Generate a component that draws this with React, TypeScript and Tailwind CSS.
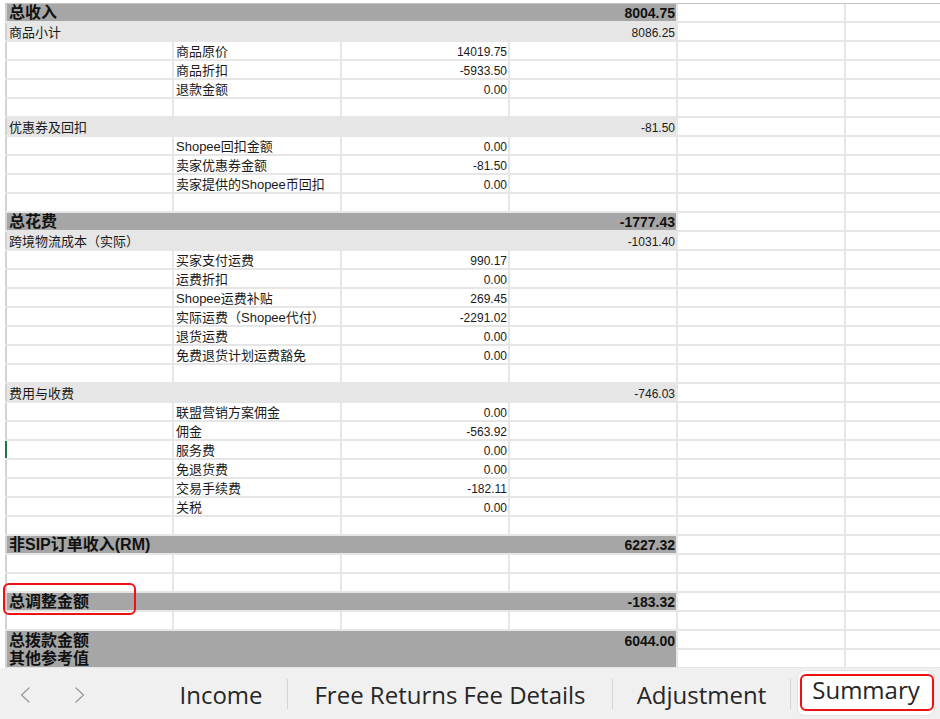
import React from "react";

type Row =
  | { kind: "major"; label: string; value: string }
  | { kind: "total"; label: string; label2: string; value: string }
  | { kind: "minor"; label: string; value: string }
  | { kind: "item"; label: string; value: string }
  | { kind: "blank" };

const rows: Row[] = [
  { kind: "major", label: "总收入", value: "8004.75" },
  { kind: "minor", label: "商品小计", value: "8086.25" },
  { kind: "item", label: "商品原价", value: "14019.75" },
  { kind: "item", label: "商品折扣", value: "-5933.50" },
  { kind: "item", label: "退款金额", value: "0.00" },
  { kind: "blank" },
  { kind: "minor", label: "优惠券及回扣", value: "-81.50" },
  { kind: "item", label: "Shopee回扣金额", value: "0.00" },
  { kind: "item", label: "卖家优惠券金额", value: "-81.50" },
  { kind: "item", label: "卖家提供的Shopee币回扣", value: "0.00" },
  { kind: "blank" },
  { kind: "major", label: "总花费", value: "-1777.43" },
  { kind: "minor", label: "跨境物流成本（实际）", value: "-1031.40" },
  { kind: "item", label: "买家支付运费", value: "990.17" },
  { kind: "item", label: "运费折扣", value: "0.00" },
  { kind: "item", label: "Shopee运费补贴", value: "269.45" },
  { kind: "item", label: "实际运费（Shopee代付）", value: "-2291.02" },
  { kind: "item", label: "退货运费", value: "0.00" },
  { kind: "item", label: "免费退货计划运费豁免", value: "0.00" },
  { kind: "blank" },
  { kind: "minor", label: "费用与收费", value: "-746.03" },
  { kind: "item", label: "联盟营销方案佣金", value: "0.00" },
  { kind: "item", label: "佣金", value: "-563.92" },
  { kind: "item", label: "服务费", value: "0.00" },
  { kind: "item", label: "免退货费", value: "0.00" },
  { kind: "item", label: "交易手续费", value: "-182.11" },
  { kind: "item", label: "关税", value: "0.00" },
  { kind: "blank" },
  { kind: "major", label: "非SIP订单收入(RM)", value: "6227.32" },
  { kind: "blank" },
  { kind: "blank" },
  { kind: "major", label: "总调整金额", value: "-183.32" },
  { kind: "blank" },
  { kind: "total", label: "总拨款金额", label2: "其他参考值", value: "6044.00" },
];

const cellFont = { fontFamily: '"Liberation Sans", "Noto Sans CJK SC", sans-serif' };

function TailCells() {
  return (
    <>
      <div className="w-[168px] shrink-0 border-r-2 border-[#e6e6e6]" />
      <div className="flex-1" />
    </>
  );
}

function SheetRow({ row, selected }: { row: Row; selected: boolean }) {
  const edge = selected ? "border-[#217346]" : "border-[#d2d2d2]";

  if (row.kind === "total") {
    return (
      <div className="flex h-[38px]">
        <div className={`w-[2px] shrink-0 border-l-2 ${edge}`} />
        <div className="w-[671px] shrink-0 flex justify-between bg-[#a6a6a6] border-r-2 border-b-2 border-[#e6e6e6] pl-[2px] pr-[1px] pt-[1px]">
          <div className="text-[16px] leading-[18px] font-bold text-[#111]">
            <div>{row.label}</div>
            <div>{row.label2}</div>
          </div>
          <div className="text-[14px] leading-[19px] font-bold text-[#111]">{row.value}</div>
        </div>
        <div className="flex-1 flex flex-col">
          <div className="flex h-[19px] border-b-2 border-[#e6e6e6]">
            <TailCells />
          </div>
          <div className="flex h-[19px] border-b-2 border-[#e6e6e6]">
            <TailCells />
          </div>
        </div>
      </div>
    );
  }

  return (
    <div className="flex h-[19px] border-b-2 border-[#e6e6e6]">
      <div className={`w-[2px] shrink-0 border-l-2 ${edge}`} />
      {row.kind === "major" && (
        <div className="w-[671px] shrink-0 flex items-center justify-between bg-[#a6a6a6] border-r-2 border-[#e6e6e6] pl-[2px] pr-[1px] pt-[1px]">
          <span className="text-[16px] font-bold text-[#111]">{row.label}</span>
          <span className="text-[14px] font-bold text-[#111]">{row.value}</span>
        </div>
      )}
      {row.kind === "minor" && (
        <div className="w-[671px] shrink-0 flex items-center justify-between bg-[#e7e6e6] border-r-2 border-[#e6e6e6] pl-[2px] pr-[1px] pt-[2px]">
          <span className="text-[13px] text-[#1a1a1a]">{row.label}</span>
          <span className="text-[12px] text-[#1a1a1a]">{row.value}</span>
        </div>
      )}
      {(row.kind === "item" || row.kind === "blank") && (
        <>
          <div className="w-[167px] shrink-0 border-r-2 border-[#e6e6e6]" />
          <div className="w-[168px] shrink-0 flex items-center border-r-2 border-[#e6e6e6] pl-[2px] pt-[2px] text-[13px] text-[#1a1a1a] whitespace-nowrap">
            {row.kind === "item" ? row.label : ""}
          </div>
          <div className="w-[168px] shrink-0 flex items-center justify-end border-r-2 border-[#e6e6e6] pr-[1px] pt-[2px] text-[12px] text-[#1a1a1a]">
            {row.kind === "item" ? row.value : ""}
          </div>
          <div className="w-[168px] shrink-0 border-r-2 border-[#e6e6e6]" />
        </>
      )}
      <TailCells />
    </div>
  );
}

function Chevron({ dir }: { dir: "left" | "right" }) {
  return (
    <svg width="10" height="16" viewBox="0 0 10 16" fill="none">
      <polyline
        points={dir === "left" ? "9,1 1.5,8 9,15" : "1,1 8.5,8 1,15"}
        stroke="#9a9a9a"
        strokeWidth="1.3"
        strokeLinecap="round"
        strokeLinejoin="round"
      />
    </svg>
  );
}

export default function App() {
  return (
    <div className="relative w-[940px] h-[719px] overflow-hidden bg-white">
      <div className="h-[668px] overflow-hidden pt-[3px] pl-[5px]" style={cellFont}>
        <div className="border-t border-[#c4c4c4]">
          {rows.map((row, i) => (
            <SheetRow key={i} row={row} selected={i === 23} />
          ))}
        </div>
      </div>

      <div
        className="flex h-[51px] bg-[#f0f0f0] text-[24px] text-[#262626]"
        style={{ fontFamily: '"Open Sans", "Noto Sans", sans-serif' }}
      >
        <div className="w-[155px] shrink-0 flex items-center gap-[45px] pl-[20px] pt-[3px]">
          <Chevron dir="left" />
          <Chevron dir="right" />
        </div>
        <div className="w-[132px] shrink-0 flex items-center justify-center pt-[3px]">Income</div>
        <div className="w-px shrink-0 self-center h-[30px] bg-[#d4d4d4]" />
        <div className="w-[324px] shrink-0 flex items-center justify-center pt-[3px]">
          Free Returns Fee Details
        </div>
        <div className="w-px shrink-0 self-center h-[30px] bg-[#d4d4d4]" />
        <div className="w-[177px] shrink-0 flex items-center justify-center pt-[3px]">Adjustment</div>
        <div className="w-px shrink-0 self-center h-[30px] bg-[#d4d4d4]" />
        <div className="relative ml-[6px] mt-[2px] w-[138px] h-[46px] shrink-0 bg-white rounded-lg border border-[#e2e2e2] flex justify-center pt-[4px]">
          <span className="leading-[30px]">Summary</span>
          <div className="absolute left-[14px] right-[14px] top-[38px] h-[2px] bg-[#217346]" />
          <div className="absolute left-[2px] top-[3px] w-[134px] h-[37px] border-[2.5px] border-[#ee1111] rounded-md" />
        </div>
      </div>

      <div className="absolute left-[3px] top-[583px] w-[133px] h-[32px] border-[2.5px] border-[#ee1111] rounded-md" />
    </div>
  );
}
